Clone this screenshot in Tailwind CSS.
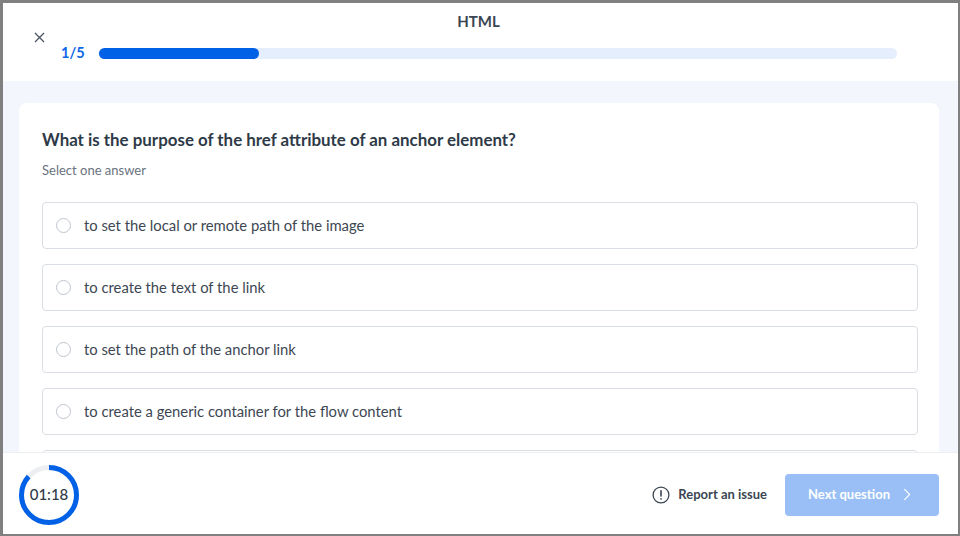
<!DOCTYPE html>
<html lang="en">
<head>
    <meta charset="UTF-8">
    <title>HTML quiz</title>
    <script src="https://cdn.jsdelivr.net/npm/@tailwindcss/browser@4"></script>
</head>
<body class="font-['Lato',sans-serif] text-[#2e3a47]">
    <div class="w-[960px] h-[536px] flex flex-col overflow-hidden border-t-[3px] border-l-[3px] border-r-[2px] border-b-[2px] border-[#808080] bg-white">
        <!-- header -->
        <header class="h-[78px] shrink-0 relative">
            <h1 class="text-center text-[15px] leading-[20px] font-bold pt-[8px] pr-[4px] text-[#3b4653]">HTML</h1>
            <button class="absolute left-[31px] top-[29px] w-[11px] h-[11px] text-[#4a5563]">
                <svg viewBox="0 0 11 11" class="w-[11px] h-[11px]" fill="none" stroke="currentColor" stroke-width="1.3"><path d="M1 1l9 9M10 1l-9 9"/></svg>
            </button>
            <div class="flex items-center mt-[12px] pl-[58px]">
                <span class="w-[38px] text-[14.5px] leading-[20px] font-bold text-[#0f67ea]">1/5</span>
                <div class="w-[798px] h-[11px] rounded-full bg-[#e5eefd]">
                    <div class="w-[160px] h-[11px] rounded-full bg-[#0060e6]"></div>
                </div>
            </div>
        </header>

        <!-- question -->
        <main class="flex-1 min-h-0 overflow-hidden bg-[#f3f7fd] px-[16px] pt-[22px]">
            <div class="bg-white rounded-t-[8px] h-[400px] px-[23px] pt-[25px] w-[920px]">
                <h2 class="text-[16.9px] leading-[24px] font-bold text-[#2e3a47]">What is the purpose of the href attribute of an anchor element?</h2>
                <p class="text-[13px] leading-[18px] text-[#69727e] mt-[9px]">Select one answer</p>
                <div class="flex flex-col gap-[15px] mt-[23px] w-[876px]">
                    <label class="h-[47px] shrink-0 flex items-center gap-[13px] px-[13px] border border-[#d9dde4] rounded-[4px] text-[14.8px] text-[#3d4753]"><span class="w-[15px] h-[15px] rounded-full border border-[#bfc5ce]"></span>to set the local or remote path of the image</label>
                    <label class="h-[47px] shrink-0 flex items-center gap-[13px] px-[13px] border border-[#d9dde4] rounded-[4px] text-[14.8px] text-[#3d4753]"><span class="w-[15px] h-[15px] rounded-full border border-[#bfc5ce]"></span>to create the text of the link</label>
                    <label class="h-[47px] shrink-0 flex items-center gap-[13px] px-[13px] border border-[#d9dde4] rounded-[4px] text-[14.8px] text-[#3d4753]"><span class="w-[15px] h-[15px] rounded-full border border-[#bfc5ce]"></span>to set the path of the anchor link</label>
                    <label class="h-[47px] shrink-0 flex items-center gap-[13px] px-[13px] border border-[#d9dde4] rounded-[4px] text-[14.8px] text-[#3d4753]"><span class="w-[15px] h-[15px] rounded-full border border-[#bfc5ce]"></span>to create a generic container for the flow content</label>
                    <div class="h-[47px] shrink-0 border border-[#d9dde4] rounded-[4px]"></div>
                </div>
            </div>
        </main>

        <!-- footer -->
        <footer class="h-[82px] shrink-0 flex items-center bg-white border-t border-[#eceef2] pt-[2px] pl-[16px] pr-[19px]">
            <div class="relative w-[60px] h-[60px] flex items-center justify-center">
                <svg viewBox="0 0 60 60" class="absolute inset-0 w-[60px] h-[60px] -rotate-90" fill="none" stroke-width="5">
                    <circle cx="30" cy="30" r="27.5" stroke="#eceef1"/>
                    <circle cx="30" cy="30" r="27.5" stroke="#0060e6" stroke-dasharray="149.7 172.8"/>
                </svg>
                <span class="text-[15px] font-medium text-[#2e3a47]">01:18</span>
            </div>
            <button class="ml-auto flex items-center gap-[8px] text-[13px] font-bold text-[#3b4653]">
                <svg viewBox="0 0 18 18" class="w-[18px] h-[18px] -ml-[1px]" fill="none" stroke="#3b4653" stroke-width="1.3" stroke-linecap="round"><circle cx="9" cy="9" r="7.9"/><path d="M9 4.8v5.2M9 12.8v.3" stroke-width="1.6"/></svg>
                Report an issue
            </button>
            <button class="ml-[18px] w-[154px] h-[42px] rounded-[4px] bg-[#99bff6] text-white text-[13px] font-bold flex items-center justify-center gap-[13px] pr-[5px]">
                Next question
                <svg viewBox="0 0 9 14" class="w-[8px] h-[13px]" fill="none" stroke="#fff" stroke-width="1.3"><path d="M1.5 1l6 6-6 6"/></svg>
            </button>
        </footer>
    </div>
</body>
</html>
